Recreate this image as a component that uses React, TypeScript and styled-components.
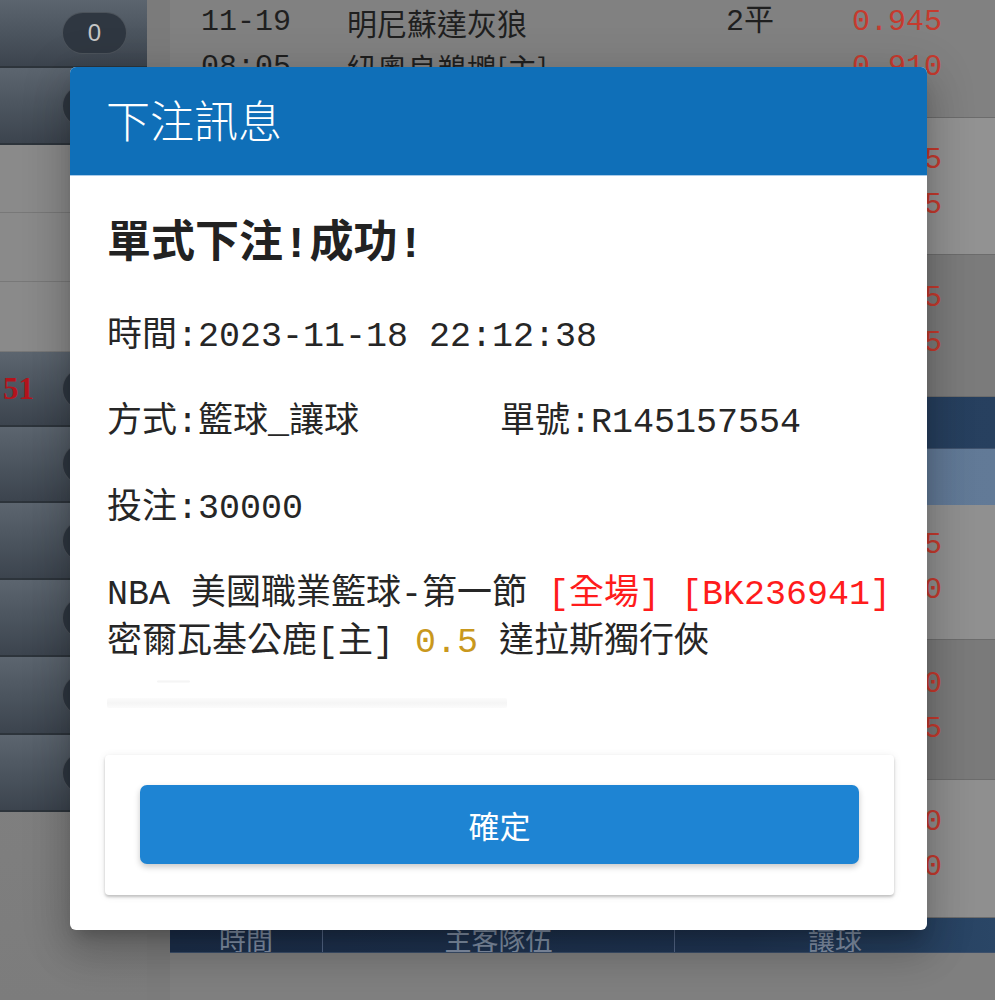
import React from "react";
import styled, { createGlobalStyle } from "styled-components";

const GlobalStyle = createGlobalStyle`
  html, body { margin: 0; padding: 0; background: #7f7f7f; overflow: hidden; }
  * { box-sizing: border-box; }
`;

const MONO = `"Liberation Mono", "Noto Sans CJK TC", monospace`;
const SANS = `"Noto Sans CJK TC", "Noto Sans", sans-serif`;

const Page = styled.div`
  position: relative;
  width: 995px;
  height: 1000px;
  display: flex;
  overflow: hidden;
  background: #7f7f7f;
`;

/* ---------- sidebar ---------- */
const Sidebar = styled.aside`
  width: 147px;
  flex: none;
  display: flex;
  flex-direction: column;
  background: linear-gradient(180deg, #8a8a8a 0%, #7c7c7c 100%);
`;

const SideItem = styled.div<{ $h: number; $dark?: boolean }>`
  height: ${(p) => p.$h}px;
  flex: none;
  display: flex;
  align-items: center;
  justify-content: space-between;
  padding: 0 20px 0 3px;
  background: ${(p) =>
    p.$dark
      ? "linear-gradient(180deg, #5c656f 0%, #4a535d 55%, #3c444e 100%)"
      : "#8a8a8a"};
  border-bottom: ${(p) => (p.$dark ? "2px solid #2d343b" : "1px solid #787878")};
`;

const SideAmount = styled.span`
  font-family: "Liberation Serif", serif;
  font-weight: 700;
  font-size: 31px;
  color: #b3141c;
`;

const Pill = styled.span`
  width: 65px;
  height: 42px;
  border-radius: 21px;
  background: #2f3741;
  border: 1px solid rgba(255, 255, 255, 0.14);
  display: flex;
  align-items: center;
  justify-content: center;
  font-family: "Liberation Sans", sans-serif;
  font-size: 24px;
  color: #c6c6c6;
`;

const Gutter = styled.div`
  width: 23px;
  flex: none;
  background: #7b7b7b;
`;

/* ---------- main table ---------- */
const Main = styled.main`
  flex: 1;
  display: flex;
  flex-direction: column;
  background: #7f7f7f;
`;

const MatchRow = styled.div<{ $h: number; $pt: number; $bg: string }>`
  height: ${(p) => p.$h}px;
  flex: none;
  padding-top: ${(p) => p.$pt}px;
  display: grid;
  grid-template-columns: 152px 352px 152px 1fr;
  align-items: start;
  background: ${(p) => p.$bg};
  border-bottom: 1px solid #6c6c6c;
  overflow: hidden;
`;

const Cell = styled.div<{ $align?: string; $pl?: number }>`
  display: flex;
  flex-direction: column;
  align-items: ${(p) => p.$align || "flex-start"};
  padding-left: ${(p) => p.$pl || 0}px;
  font-size: 30px;
  line-height: 45px;
  white-space: nowrap;
  color: #1f1f1f;
`;

const MonoText = styled.span<{ $red?: boolean }>`
  font-family: ${MONO};
  color: ${(p) => (p.$red ? "#c63a2e" : "#1f1f1f")};
  height: 45px;
`;

const SansText = styled.span`
  font-family: ${SANS};
  height: 45px;
`;

const LeagueBar = styled.div`
  height: 51px;
  flex: none;
  display: flex;
  align-items: center;
  padding-left: 24px;
  background: linear-gradient(90deg, #1d3252 0%, #27405f 100%);
  font-family: ${SANS};
  font-size: 28px;
  color: #b8c3d2;
`;

const SubBar = styled.div`
  height: 57px;
  flex: none;
  display: flex;
  align-items: center;
  padding-left: 24px;
  background: linear-gradient(90deg, #566d8c 0%, #627a97 100%);
  border-top: 1px solid #40536e;
  font-family: ${SANS};
  font-size: 26px;
  color: #dde3ea;
`;

const HeadBar = styled.div`
  height: 35px;
  flex: none;
  display: grid;
  grid-template-columns: 152px 352px 1fr;
  background: linear-gradient(90deg, #1d304c 0%, #213756 70%, #2a4666 100%);
  border-bottom: 1px solid #3b4f6b;
`;

const HeadCell = styled.div<{ $first?: boolean }>`
  display: flex;
  justify-content: center;
  align-items: center;
  padding-top: 8px;
  border-left: ${(p) => (p.$first ? "none" : "1px solid #56698a")};
  font-family: ${SANS};
  font-size: 27px;
  color: #8594aa;
  overflow: hidden;
`;

/* ---------- modal ---------- */
const Overlay = styled.div`
  position: absolute;
  inset: 0;
  padding: 67px 0 0 70px;
  display: flex;
  align-items: flex-start;
`;

const Dialog = styled.section`
  width: 857px;
  background: #ffffff;
  border-radius: 6px;
  overflow: hidden;
  box-shadow: 0 11px 15px -7px rgba(0, 0, 0, 0.2),
    0 24px 38px 3px rgba(0, 0, 0, 0.14), 0 9px 46px 8px rgba(0, 0, 0, 0.12);
`;

const DialogHeader = styled.header`
  height: 109px;
  display: flex;
  align-items: center;
  padding: 0 0 4px 36px;
  background: #0f6fb8;
  border-bottom: 1px solid #a9cbe9;
  font-family: ${SANS};
  font-size: 44px;
  font-weight: 300;
  color: #ffffff;
`;

const DialogBody = styled.div`
  padding: 44px 34px 35px 37px;
  font-family: ${MONO};
  font-size: 35px;
  color: #262626;
`;

const Heading = styled.h2`
  margin: 0 0 43px;
  font-family: ${MONO};
  font-size: 44px;
  line-height: 50px;
  font-weight: 700;
  color: #222222;
`;

const InfoLine = styled.div`
  line-height: 48px;
  white-space: nowrap;
  & + & {
    margin-top: 38px;
  }
`;

const InfoPair = styled.div`
  display: grid;
  grid-template-columns: 1fr 1fr;
`;

const DetailLine = styled.span`
  display: block;
  white-space: nowrap;
`;

const Red = styled.span`
  color: #ff1c1c;
`;

const Gold = styled.span`
  color: #c9981d;
`;

const Redacted = styled.div`
  margin-top: 13px;
  display: flex;
  flex-direction: column;
  gap: 15px;
`;

const RedactBar = styled.div<{ $w: number; $h: number; $ml?: number }>`
  width: ${(p) => p.$w}px;
  height: ${(p) => p.$h}px;
  margin-left: ${(p) => p.$ml || 0}px;
  background: linear-gradient(180deg, #fbfbfb 0%, #f5f5f5 50%, #fbfbfb 100%);
  border-radius: 2px;
`;

const ActionCard = styled.div`
  margin: 47px -1px 0 -2px;
  padding: 30px 35px 31px;
  background: #ffffff;
  border-radius: 4px;
  box-shadow: 0 2px 3px rgba(0, 0, 0, 0.22), 0 1px 8px rgba(0, 0, 0, 0.08);
`;

const ConfirmButton = styled.button`
  width: 100%;
  height: 79px;
  border: none;
  border-radius: 7px;
  background: #1e84d3;
  color: #ffffff;
  font-family: ${SANS};
  font-size: 31px;
  font-weight: 400;
  box-shadow: 0 3px 6px rgba(0, 0, 0, 0.22);
  cursor: pointer;
`;

type Row = {
  h: number;
  pt: number;
  bg: string;
  time: [string, string];
  teams: [string, string];
  hdp: [string, string];
  odds: [string, string];
};

const topRows: Row[] = [
  { h: 118, pt: 0, bg: "#818181", time: ["11-19", "08:05"], teams: ["明尼蘇達灰狼", "紐奧良鵜鶘[主]"], hdp: ["2平", ""], odds: ["0.945", "0.910"] },
  { h: 137, pt: 20, bg: "#929292", time: ["11-19", "08:35"], teams: ["波士頓塞爾提克", "多倫多暴龍[主]"], hdp: ["", "1.5"], odds: ["0.925", "0.935"] },
  { h: 142, pt: 21, bg: "#7b7b7b", time: ["11-19", "09:05"], teams: ["丹佛金塊", "休士頓火箭[主]"], hdp: ["3平", ""], odds: ["0.895", "0.955"] },
];

const bottomRows: Row[] = [
  { h: 135, pt: 18, bg: "#909090", time: ["11-19", "09:05"], teams: ["密爾瓦基公鹿[主]", "達拉斯獨行俠"], hdp: ["0.5", ""], odds: ["0.935", "0.910"] },
  { h: 140, pt: 22, bg: "#7a7a7a", time: ["11-19", "09:35"], teams: ["洛杉磯湖人[主]", "鳳凰城太陽"], hdp: ["1", ""], odds: ["0.910", "0.945"] },
  { h: 138, pt: 20, bg: "#8f8f8f", time: ["11-19", "10:05"], teams: ["金州勇士[主]", "沙加緬度國王"], hdp: ["1.5", ""], odds: ["0.940", "0.910"] },
];

const sideItems: { h: number; dark?: boolean; amount?: string; pill?: boolean }[] = [
  { h: 68, dark: true, pill: true },
  { h: 77, dark: true, pill: true },
  { h: 68 },
  { h: 69 },
  { h: 70 },
  { h: 75, dark: true, amount: "51", pill: true },
  { h: 76, dark: true, pill: true },
  { h: 77, dark: true, pill: true },
  { h: 77, dark: true, pill: true },
  { h: 78, dark: true, pill: true },
  { h: 77, dark: true, pill: true },
];

function MatchRowView({ row }: { row: Row }) {
  return (
    <MatchRow $h={row.h} $pt={row.pt} $bg={row.bg}>
      <Cell $align="center">
        <MonoText>{row.time[0]}</MonoText>
        <MonoText>{row.time[1]}</MonoText>
      </Cell>
      <Cell $pl={25}>
        <SansText>{row.teams[0]}</SansText>
        <SansText>{row.teams[1]}</SansText>
      </Cell>
      <Cell $align="center">
        <MonoText>{row.hdp[0]}</MonoText>
        <MonoText>{row.hdp[1]}</MonoText>
      </Cell>
      <Cell $pl={26}>
        <MonoText $red>{row.odds[0]}</MonoText>
        <MonoText $red>{row.odds[1]}</MonoText>
      </Cell>
    </MatchRow>
  );
}

export default function App() {
  return (
    <>
      <GlobalStyle />
      <Page>
        <Sidebar>
          {sideItems.map((it, i) => (
            <SideItem key={i} $h={it.h} $dark={it.dark}>
              <SideAmount>{it.amount || ""}</SideAmount>
              {it.pill && <Pill>0</Pill>}
            </SideItem>
          ))}
        </Sidebar>
        <Gutter />
        <Main>
          {topRows.map((r, i) => (
            <MatchRowView key={`t${i}`} row={r} />
          ))}
          <LeagueBar>NBA 美國職業籃球-第一節</LeagueBar>
          <SubBar>讓球 / 大小</SubBar>
          {bottomRows.map((r, i) => (
            <MatchRowView key={`b${i}`} row={r} />
          ))}
          <HeadBar>
            <HeadCell $first>時間</HeadCell>
            <HeadCell>主客隊伍</HeadCell>
            <HeadCell>讓球</HeadCell>
          </HeadBar>
        </Main>

        <Overlay>
          <Dialog role="dialog" aria-label="下注訊息">
            <DialogHeader>下注訊息</DialogHeader>
            <DialogBody>
              <Heading>單式下注!成功!</Heading>
              <InfoLine>時間:2023-11-18 22:12:38</InfoLine>
              <InfoLine>
                <InfoPair>
                  <span>方式:籃球_讓球</span>
                  <span>單號:R145157554</span>
                </InfoPair>
              </InfoLine>
              <InfoLine>投注:30000</InfoLine>
              <InfoLine>
                <DetailLine>
                  NBA 美國職業籃球-第一節 <Red>[全場]</Red> <Red>[BK236941]</Red>
                </DetailLine>
                <DetailLine>
                  密爾瓦基公鹿[主] <Gold>0.5</Gold> 達拉斯獨行俠
                </DetailLine>
              </InfoLine>
              <Redacted aria-hidden="true">
                <RedactBar $w={33} $h={3} $ml={50} />
                <RedactBar $w={400} $h={10} />
              </Redacted>
              <ActionCard>
                <ConfirmButton type="button">確定</ConfirmButton>
              </ActionCard>
            </DialogBody>
          </Dialog>
        </Overlay>
      </Page>
    </>
  );
}
